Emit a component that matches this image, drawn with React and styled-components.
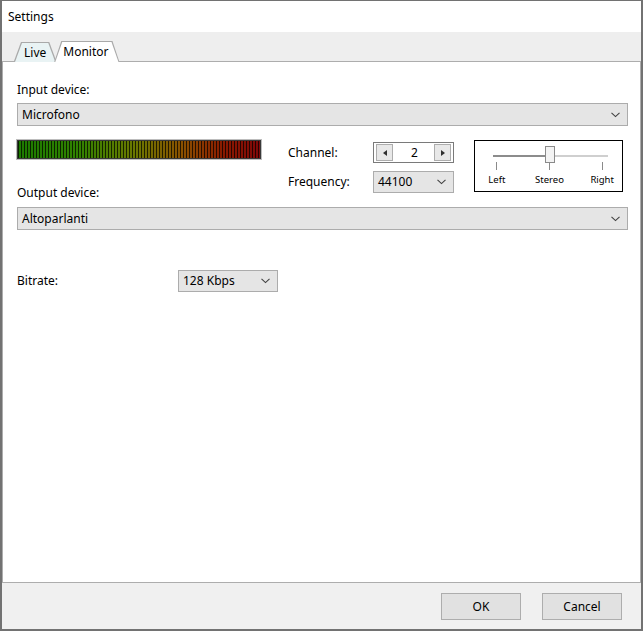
import React from 'react'
import styled, { createGlobalStyle } from 'styled-components'

const Global = createGlobalStyle`
  html, body {
    margin: 0;
    padding: 0;
    background: #fff;
  }
  body {
    font-family: 'Noto Sans', 'Open Sans', sans-serif;
    font-size: 12px;
    color: #000;
  }
`

const Window = styled.div`
  width: 643px;
  height: 631px;
  box-sizing: border-box;
  border: 2px solid #727272;
  border-top-width: 1px;
  display: flex;
  flex-direction: column;
  background: #fff;
`

const TitleBar = styled.div`
  height: 31px;
  flex: none;
  display: flex;
  align-items: center;
  padding-left: 6px;
  line-height: 16px;
  padding-top: 1px;
  box-sizing: border-box;
`

const TabStrip = styled.div`
  height: 29px;
  flex: none;
  background: #eeeeee;
  display: flex;
  align-items: flex-end;
  padding-left: 12px;
  position: relative;
  z-index: 2;
`

const Tab = styled.div`
  position: relative;
  height: ${({ $active }) => ($active ? '21px' : '19px')};
  margin-bottom: ${({ $active }) => ($active ? '-1px' : '0')};
  margin-left: ${({ $active }) => ($active ? '-2px' : '0')};
  padding: ${({ $active }) => ($active ? '1px 11px 0 9px' : '2px 10px 0 10px')};
  z-index: ${({ $active }) => ($active ? 2 : 1)};
  display: flex;
  align-items: center;
  box-sizing: border-box;
  line-height: 16px;

  &::before,
  &::after {
    content: '';
    position: absolute;
    inset: 0;
  }
  &::before {
    background: #a9a9a9;
    clip-path: polygon(0 100%, 7px 0, calc(100% - 7px) 0, 100% 100%);
  }
  &::after {
    background: ${({ $active }) => ($active ? '#ffffff' : '#e9f3f4')};
    clip-path: polygon(1px 100%, 8px 1px, calc(100% - 8px) 1px, calc(100% - 1px) 100%);
    bottom: ${({ $active }) => ($active ? '0' : '-1px')};
  }
  span {
    position: relative;
    z-index: 1;
  }
`

const Panel = styled.div`
  flex: 1;
  border: 1px solid #adadad;
  position: relative;
  z-index: 1;
  padding: 20px 12px 0 14px;
  display: flex;
  flex-direction: column;
`

const Label = styled.div`
  line-height: 16px;
  margin-bottom: ${({ $mb }) => $mb || 0}px;
  margin-top: ${({ $mt }) => $mt || 0}px;
  width: ${({ $w }) => ($w ? `${$w}px` : 'auto')};
  flex: none;
`

const Combo = styled.div`
  height: ${({ $h }) => $h || 23}px;
  width: ${({ $w }) => ($w ? `${$w}px` : 'auto')};
  box-sizing: border-box;
  border: 1px solid #acacac;
  background: #e5e5e5;
  display: flex;
  align-items: center;
  justify-content: space-between;
  padding: 0 7px 0 4px;
  margin-top: ${({ $mt }) => $mt || 0}px;
  line-height: 16px;
  flex: none;
`

const Chevron = () => (
  <svg width="9" height="6" viewBox="0 0 9 6">
    <path d="M0.5 0.8 L4.5 4.6 L8.5 0.8" fill="none" stroke="#404040" strokeWidth="1.1" />
  </svg>
)

const MiddleRow = styled.div`
  display: flex;
  align-items: flex-start;
  margin-top: 14px;
`

const LeftCol = styled.div`
  width: 244px;
  display: flex;
  flex-direction: column;
`

const Meter = styled.div`
  height: 19px;
  box-sizing: border-box;
  border: 1px solid #3a3a3a;
  box-shadow: 0 0 0 1px #bdbdbd;
  background:
    repeating-linear-gradient(90deg, rgba(0, 0, 0, 0.72) 0 1px, transparent 1px 3px),
    linear-gradient(90deg, #1c7a00 0%, #318200 25%, #6a7800 48%, #8a5000 68%, #8a1a00 85%, #800808 100%);
`

const Form = styled.div`
  display: grid;
  grid-template-columns: 85px 81px;
  row-gap: 8px;
  margin-left: 27px;
  margin-top: 2px;
  align-items: center;
`

const Spinner = styled.div`
  height: 21px;
  box-sizing: border-box;
  border: 1px solid #7a7a7a;
  display: flex;
  align-items: center;
  padding: 0 2px;
`

const SpinButton = styled.div`
  width: 17px;
  height: 17px;
  box-sizing: border-box;
  border: 1px solid #adadad;
  background: #e8e8e8;
  display: flex;
  align-items: center;
  justify-content: center;
  flex: none;
`

const SpinValue = styled.div`
  flex: 1;
  text-align: center;
  line-height: 16px;
  padding-left: 2px;
`

const SliderBox = styled.div`
  width: 149px;
  height: 52px;
  box-sizing: border-box;
  border: 1px solid #000;
  margin-left: 20px;
  display: flex;
  flex-direction: column;
`

const Track = styled.div`
  position: relative;
  margin: 14px 0 0 18px;
  width: 115px;
  height: 2px;
  background: linear-gradient(90deg, #8c8c8c 0 52px, #cfcfcf 52px);
`

const Thumb = styled.div`
  position: absolute;
  left: 52px;
  top: -9px;
  width: 10px;
  height: 17px;
  box-sizing: border-box;
  border: 1px solid #8a8a8a;
  background: #f3f3f3;
`

const Ticks = styled.div`
  display: flex;
  padding-left: 2px;
  gap: 13px;
  margin-top: 5px;
`

const Tick = styled.div`
  width: 40px;
  display: flex;
  flex-direction: column;
  align-items: center;
  font-size: 9.5px;
  line-height: 12px;

  &::before {
    content: '';
    width: 1px;
    height: 8px;
    background: #8a8a8a;
    margin-bottom: 4px;
  }
`

const Arrow = ({ dir }) => (
  <svg width="4" height="6" viewBox="0 0 4 6">
    <path d={dir === 'left' ? 'M4 0 L0 3 L4 6 Z' : 'M0 0 L4 3 L0 6 Z'} fill="#303030" />
  </svg>
)

const Row = styled.div`
  display: flex;
  align-items: center;
  margin-top: ${({ $mt }) => $mt || 0}px;
`

const ButtonBar = styled.div`
  height: 46px;
  flex: none;
  background: #f0f0f0;
  display: flex;
  justify-content: flex-end;
  align-items: flex-start;
  padding: 10px 19px 0 0;
  box-sizing: border-box;
  gap: 21px;
`

const Button = styled.div`
  width: 80px;
  height: 27px;
  box-sizing: border-box;
  border: 1px solid #adadad;
  background: #e1e1e1;
  display: flex;
  align-items: center;
  justify-content: center;
  line-height: 16px;
`

export default function App() {
  return (
    <>
      <Global />
      <Window>
        <TitleBar>Settings</TitleBar>
        <TabStrip>
          <Tab>
            <span>Live</span>
          </Tab>
          <Tab $active>
            <span>Monitor</span>
          </Tab>
        </TabStrip>
        <Panel>
          <Label $mb={5}>Input device:</Label>
          <Combo>
            <span>Microfono</span>
            <Chevron />
          </Combo>
          <MiddleRow>
            <LeftCol>
              <Meter />
              <Label $mt={26}>Output device:</Label>
            </LeftCol>
            <Form>
              <Label>Channel:</Label>
              <Spinner>
                <SpinButton>
                  <Arrow dir="left" />
                </SpinButton>
                <SpinValue>2</SpinValue>
                <SpinButton>
                  <Arrow dir="right" />
                </SpinButton>
              </Spinner>
              <Label>Frequency:</Label>
              <Combo $h={22}>
                <span>44100</span>
                <Chevron />
              </Combo>
            </Form>
            <SliderBox>
              <Track>
                <Thumb />
              </Track>
              <Ticks>
                <Tick>Left</Tick>
                <Tick>Stereo</Tick>
                <Tick>Right</Tick>
              </Ticks>
            </SliderBox>
          </MiddleRow>
          <Combo $mt={6}>
            <span>Altoparlanti</span>
            <Chevron />
          </Combo>
          <Row $mt={40}>
            <Label $w={161}>Bitrate:</Label>
            <Combo $h={22} $w={100}>
              <span>128 Kbps</span>
              <Chevron />
            </Combo>
          </Row>
        </Panel>
        <ButtonBar>
          <Button>OK</Button>
          <Button>Cancel</Button>
        </ButtonBar>
      </Window>
    </>
  )
}
